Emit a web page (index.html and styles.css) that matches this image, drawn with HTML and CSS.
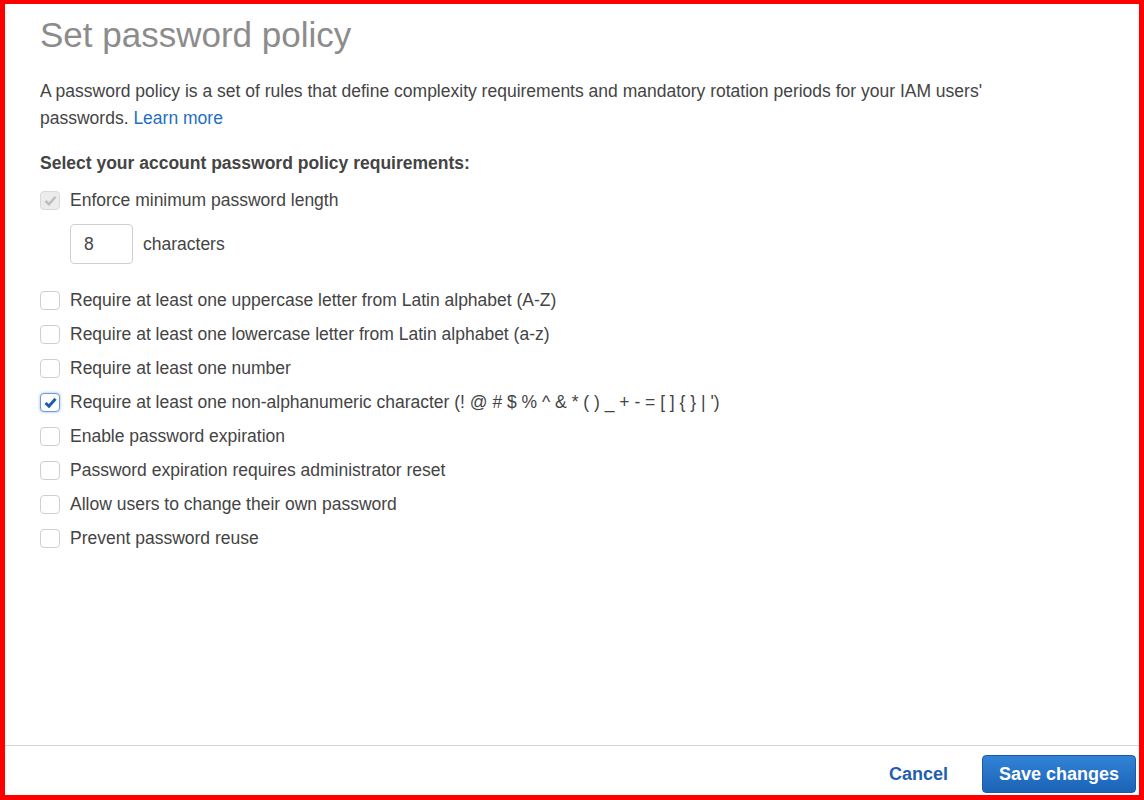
FILE: index.html
```html
<!DOCTYPE html>
<html lang="en">
<head>
    <meta charset="UTF-8">
    <title>Set password policy</title>
    <link rel="stylesheet" href="styles.css">
</head>
<body>
    <div class="frame">
        <div class="content">
            <h1 class="title">Set password policy</h1>

            <p class="intro">
                A password policy is a set of rules that define complexity requirements and mandatory rotation periods for your IAM users'
                passwords. <a href="#">Learn more</a>
            </p>

            <h3 class="section-title">Select your account password policy requirements:</h3>

            <label class="option first">
                <span class="box disabled">
                    <svg width="13" height="11" viewBox="0 0 13 11"><path d="M1.5 6 L5 9.2 L11.5 1.8" fill="none" stroke="#bdbdbd" stroke-width="2.4"/></svg>
                </span>
                Enforce minimum password length
            </label>

            <div class="length-row">
                <input class="length-input" type="text" value="8">
                <span>characters</span>
            </div>

            <div class="options">
                <label class="option"><span class="box"></span>Require at least one uppercase letter from Latin alphabet (A-Z)</label>
                <label class="option"><span class="box"></span>Require at least one lowercase letter from Latin alphabet (a-z)</label>
                <label class="option"><span class="box"></span>Require at least one number</label>
                <label class="option">
                    <span class="box checked">
                        <svg width="13" height="11" viewBox="0 0 13 11"><path d="M1.5 6 L5 9.2 L11.5 1.8" fill="none" stroke="#1a5fb0" stroke-width="3"/></svg>
                    </span>
                    Require at least one non-alphanumeric character (! @ # $ % ^ &amp; * ( ) _ + - = [ ] { } | ')
                </label>
                <label class="option"><span class="box"></span>Enable password expiration</label>
                <label class="option"><span class="box"></span>Password expiration requires administrator reset</label>
                <label class="option"><span class="box"></span>Allow users to change their own password</label>
                <label class="option"><span class="box"></span>Prevent password reuse</label>
            </div>
        </div>

        <div class="footer">
            <a class="cancel" href="#">Cancel</a>
            <button class="save">Save changes</button>
        </div>
    </div>
</body>
</html>
```

FILE: styles.css
```css
html, body {
    margin: 0;
    padding: 0;
}

body {
    font-family: "Liberation Sans", Arial, sans-serif;
    color: #444;
    background-color: white;
}

.frame {
    box-sizing: border-box;
    height: 800px;
    border: 5px solid #ff0000;
    border-top-width: 4px;
    display: flex;
    flex-direction: column;
}

.content {
    flex: 1;
    padding: 0 35px;
}

.title {
    margin: 11px 0 0 0;
    font-size: 35px;
    font-weight: normal;
    line-height: 40px;
    color: #8c8c8c;
}

.intro {
    margin: 23px 0 0 0;
    font-size: 17.5px;
    line-height: 27px;
    max-width: 1000px;
}

.intro a {
    color: #1f6fbf;
    text-decoration: none;
}

.section-title {
    margin: 19px 0 0 0;
    font-size: 17.5px;
    line-height: 24px;
    font-weight: bold;
    color: #444;
}

.option {
    display: flex;
    align-items: center;
    height: 34px;
    font-size: 17.5px;
}

.option.first {
    margin-top: 8px;
}

.box {
    box-sizing: border-box;
    width: 20px;
    height: 19px;
    margin-right: 10px;
    border: 1px solid #cfcfcf;
    border-radius: 4px;
    background-color: white;
    display: flex;
    align-items: center;
    justify-content: center;
    flex-shrink: 0;
}

.box.disabled {
    background-color: #ececec;
    border-color: #d9d9d9;
}

.box.checked {
    border-color: #6c9bd6;
    box-shadow: 0 0 3px rgba(66, 133, 214, 0.6);
}

.length-row {
    display: flex;
    align-items: center;
    gap: 10px;
    margin: 7px 0 0 30px;
    font-size: 17.5px;
}

.length-input {
    box-sizing: border-box;
    width: 63px;
    height: 40px;
    padding: 0 13px;
    border: 1px solid #cfcfcf;
    border-radius: 4px;
    font-family: inherit;
    font-size: 17.5px;
    color: #444;
}

.options {
    margin-top: 19px;
}

.footer {
    display: flex;
    justify-content: flex-end;
    align-items: flex-start;
    gap: 34px;
    height: 50px;
    box-sizing: border-box;
    padding: 9px 3px 0 0;
    border-top: 1px solid #d6d6d6;
}

.cancel {
    margin-top: 9px;
    font-size: 18px;
    font-weight: bold;
    color: #1f5fae;
    text-decoration: none;
}

.save {
    width: 154px;
    height: 38px;
    border: 1px solid #1c5aa3;
    border-radius: 4px;
    background: linear-gradient(#3283d8, #1b63b5);
    color: white;
    font-family: inherit;
    font-size: 18px;
    font-weight: bold;
    cursor: pointer;
}
```
